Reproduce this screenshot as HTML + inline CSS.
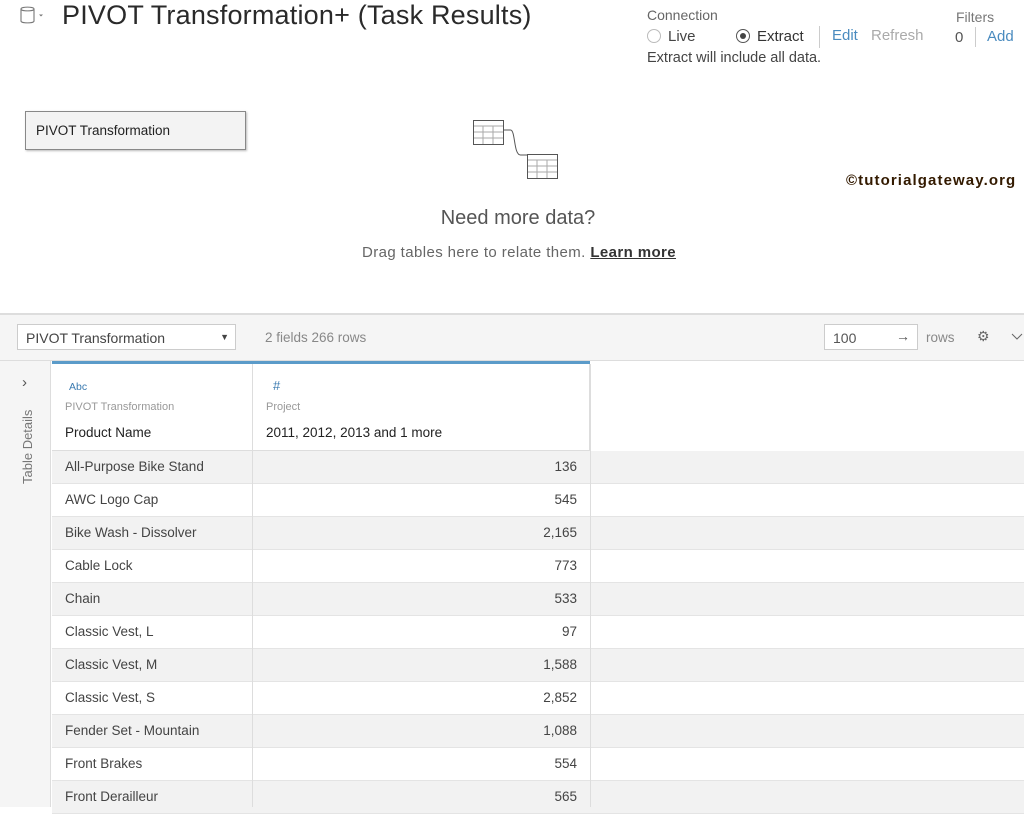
<!DOCTYPE html>
<html><head><meta charset="utf-8"><style>
*{margin:0;padding:0;box-sizing:border-box}
body{width:1024px;height:807px;overflow:hidden;background:#fff;font-family:"Liberation Sans",sans-serif;position:relative;color:#333}
.a{position:absolute;white-space:nowrap}
.row{position:absolute;left:52px;width:972px;height:33px;border-bottom:1px solid #e4e4e4;font-size:13.5px;color:#444}
.row.g{background:#f2f2f2}
.row .n{position:absolute;left:13px;top:8px}
.row .v{position:absolute;left:200px;width:325px;text-align:right;top:8px}
</style></head><body>
<svg class="a" style="left:19px;top:5px" width="30" height="22"><path d="M2 4v12c0 2.5 13 2.5 13 0V4c0-2.5-13-2.5-13 0c0 2.5 13 2.5 13 0" fill="none" stroke="#777" stroke-width="1.1"/><path d="M20 9.5l2 2 2-2z" fill="#777"/></svg>
<div class="a" style="left:62px;top:0;font-size:27px;color:#2a2a2a;letter-spacing:0.2px">PIVOT Transformation+ (Task Results)</div>
<div class="a" style="left:647px;top:7px;font-size:14px;color:#666">Connection</div>
<div class="a" style="left:647px;top:29px;width:14px;height:14px;border:1px solid #bbb;border-radius:50%"></div>
<div class="a" style="left:668px;top:28px;font-size:15px;color:#444">Live</div>
<div class="a" style="left:736px;top:29px;width:14px;height:14px;border:1px solid #555;border-radius:50%"><div style="margin:3px;width:6px;height:6px;background:#444;border-radius:50%"></div></div>
<div class="a" style="left:757px;top:28px;font-size:15px;color:#333">Extract</div>
<div class="a" style="left:819px;top:26px;width:1px;height:22px;background:#ccc"></div>
<div class="a" style="left:832px;top:27px;font-size:15px;color:#4a8bbf">Edit</div>
<div class="a" style="left:871px;top:27px;font-size:15px;color:#aaa">Refresh</div>
<div class="a" style="left:647px;top:50px;font-size:14.5px;color:#444">Extract will include all data.</div>
<div class="a" style="left:956px;top:9px;font-size:14px;color:#777">Filters</div>
<div class="a" style="left:955px;top:29px;font-size:15px;color:#555">0</div>
<div class="a" style="left:975px;top:27px;width:1px;height:20px;background:#ccc"></div>
<div class="a" style="left:987px;top:28px;font-size:15px;color:#4a8bbf">Add</div>
<div class="a" style="left:25px;top:111px;width:221px;height:39px;background:#f3f3f3;border:1px solid #888;box-shadow:1px 1px 2px #bbb;font-size:13.5px;color:#222;padding:11px 0 0 10px">PIVOT Transformation</div>
<svg class="a" style="left:472px;top:119px" width="92" height="62" fill="none" stroke="#555"><rect x="1.5" y="1.5" width="30" height="24"/><path d="M2 7h29M2 13h29M2 19h29M11 7v18M21 7v18" stroke="#aaa"/><path d="M31.5 11h7c5 0 3 25 10 25h7"/><rect x="55.5" y="35.5" width="30" height="24"/><path d="M56 41h29M56 47h29M56 53h29M65 41v18M75 41v18" stroke="#aaa"/></svg>
<div class="a" style="left:846px;top:172px;font-size:15px;font-weight:bold;color:#331a00;letter-spacing:1.1px">©tutorialgateway.org</div>
<div class="a" style="left:0;width:1036px;text-align:center;top:207px;font-size:20px;color:#555">Need more data?</div>
<div class="a" style="left:362px;top:244px;font-size:15px;color:#666;letter-spacing:0.4px">Drag tables here to relate them. <span style="color:#333;text-decoration:underline;font-weight:bold">Learn more</span></div>
<div class="a" style="left:0;top:313px;width:1024px;height:48px;background:#f5f5f5;border-top:2px solid #ddd;border-bottom:1px solid #ddd"></div>
<div class="a" style="left:17px;top:324px;width:219px;height:26px;background:#fff;border:1px solid #ccc;font-size:14px;color:#444;padding:5px 0 0 8px">PIVOT Transformation<span style="position:absolute;right:6px;top:7px;font-size:9px">▼</span></div>
<div class="a" style="left:265px;top:330px;font-size:13.5px;color:#888">2 fields 266 rows</div>
<div class="a" style="left:824px;top:324px;width:94px;height:26px;background:#fff;border:1px solid #ccc;font-size:14px;color:#555;padding:5px 0 0 8px">100<span style="position:absolute;right:7px;top:3px">→</span></div>
<div class="a" style="left:926px;top:330px;font-size:13.5px;color:#888">rows</div>
<div class="a" style="left:977px;top:328px;font-size:14px;color:#666">⚙</div>
<svg class="a" style="left:1011px;top:333px" width="12" height="8"><path d="M1 1l5 5 5-5" fill="none" stroke="#666"/></svg>
<div class="a" style="left:0;top:361px;width:51px;height:446px;background:#f5f5f5;border-right:1px solid #ddd"></div>
<div class="a" style="left:22px;top:374px;font-size:15px;color:#555">›</div>
<div class="a" style="left:20px;top:484px;font-size:13px;color:#777;transform:rotate(-90deg);transform-origin:0 0">Table Details</div>
<div class="a" style="left:52px;top:361px;width:538px;height:3px;background:#5b9bc9"></div>
<div class="a" style="left:52px;top:364px;width:538px;height:87px;border-bottom:1px solid #ddd;border-right:1px solid #ddd"></div>
<div class="a" style="left:252px;top:364px;width:1px;height:443px;background:#ddd"></div>
<div class="a" style="left:590px;top:364px;width:1px;height:443px;background:#ddd"></div>
<div class="a" style="left:69px;top:381px;font-size:10.5px;color:#3a7ab0">Abc</div>
<div class="a" style="left:273px;top:378px;font-size:13px;color:#3a7ab0">#</div>
<div class="a" style="left:65px;top:401px;font-size:11px;color:#999">PIVOT Transformation</div>
<div class="a" style="left:266px;top:401px;font-size:11px;color:#999">Project</div>
<div class="a" style="left:65px;top:425px;font-size:13.5px;color:#222">Product Name</div>
<div class="a" style="left:266px;top:425px;font-size:13.5px;color:#222">2011, 2012, 2013 and 1 more</div>
<div class="row g" style="top:451px"><span class="n">All-Purpose Bike Stand</span><span class="v">136</span></div>
<div class="row" style="top:484px"><span class="n">AWC Logo Cap</span><span class="v">545</span></div>
<div class="row g" style="top:517px"><span class="n">Bike Wash - Dissolver</span><span class="v">2,165</span></div>
<div class="row" style="top:550px"><span class="n">Cable Lock</span><span class="v">773</span></div>
<div class="row g" style="top:583px"><span class="n">Chain</span><span class="v">533</span></div>
<div class="row" style="top:616px"><span class="n">Classic Vest, L</span><span class="v">97</span></div>
<div class="row g" style="top:649px"><span class="n">Classic Vest, M</span><span class="v">1,588</span></div>
<div class="row" style="top:682px"><span class="n">Classic Vest, S</span><span class="v">2,852</span></div>
<div class="row g" style="top:715px"><span class="n">Fender Set - Mountain</span><span class="v">1,088</span></div>
<div class="row" style="top:748px"><span class="n">Front Brakes</span><span class="v">554</span></div>
<div class="row g" style="top:781px"><span class="n">Front Derailleur</span><span class="v">565</span></div>
<div class="a" style="left:252px;top:451px;width:1px;height:356px;background:#ddd"></div>
<div class="a" style="left:590px;top:451px;width:1px;height:356px;background:#ddd"></div>
</body></html>
